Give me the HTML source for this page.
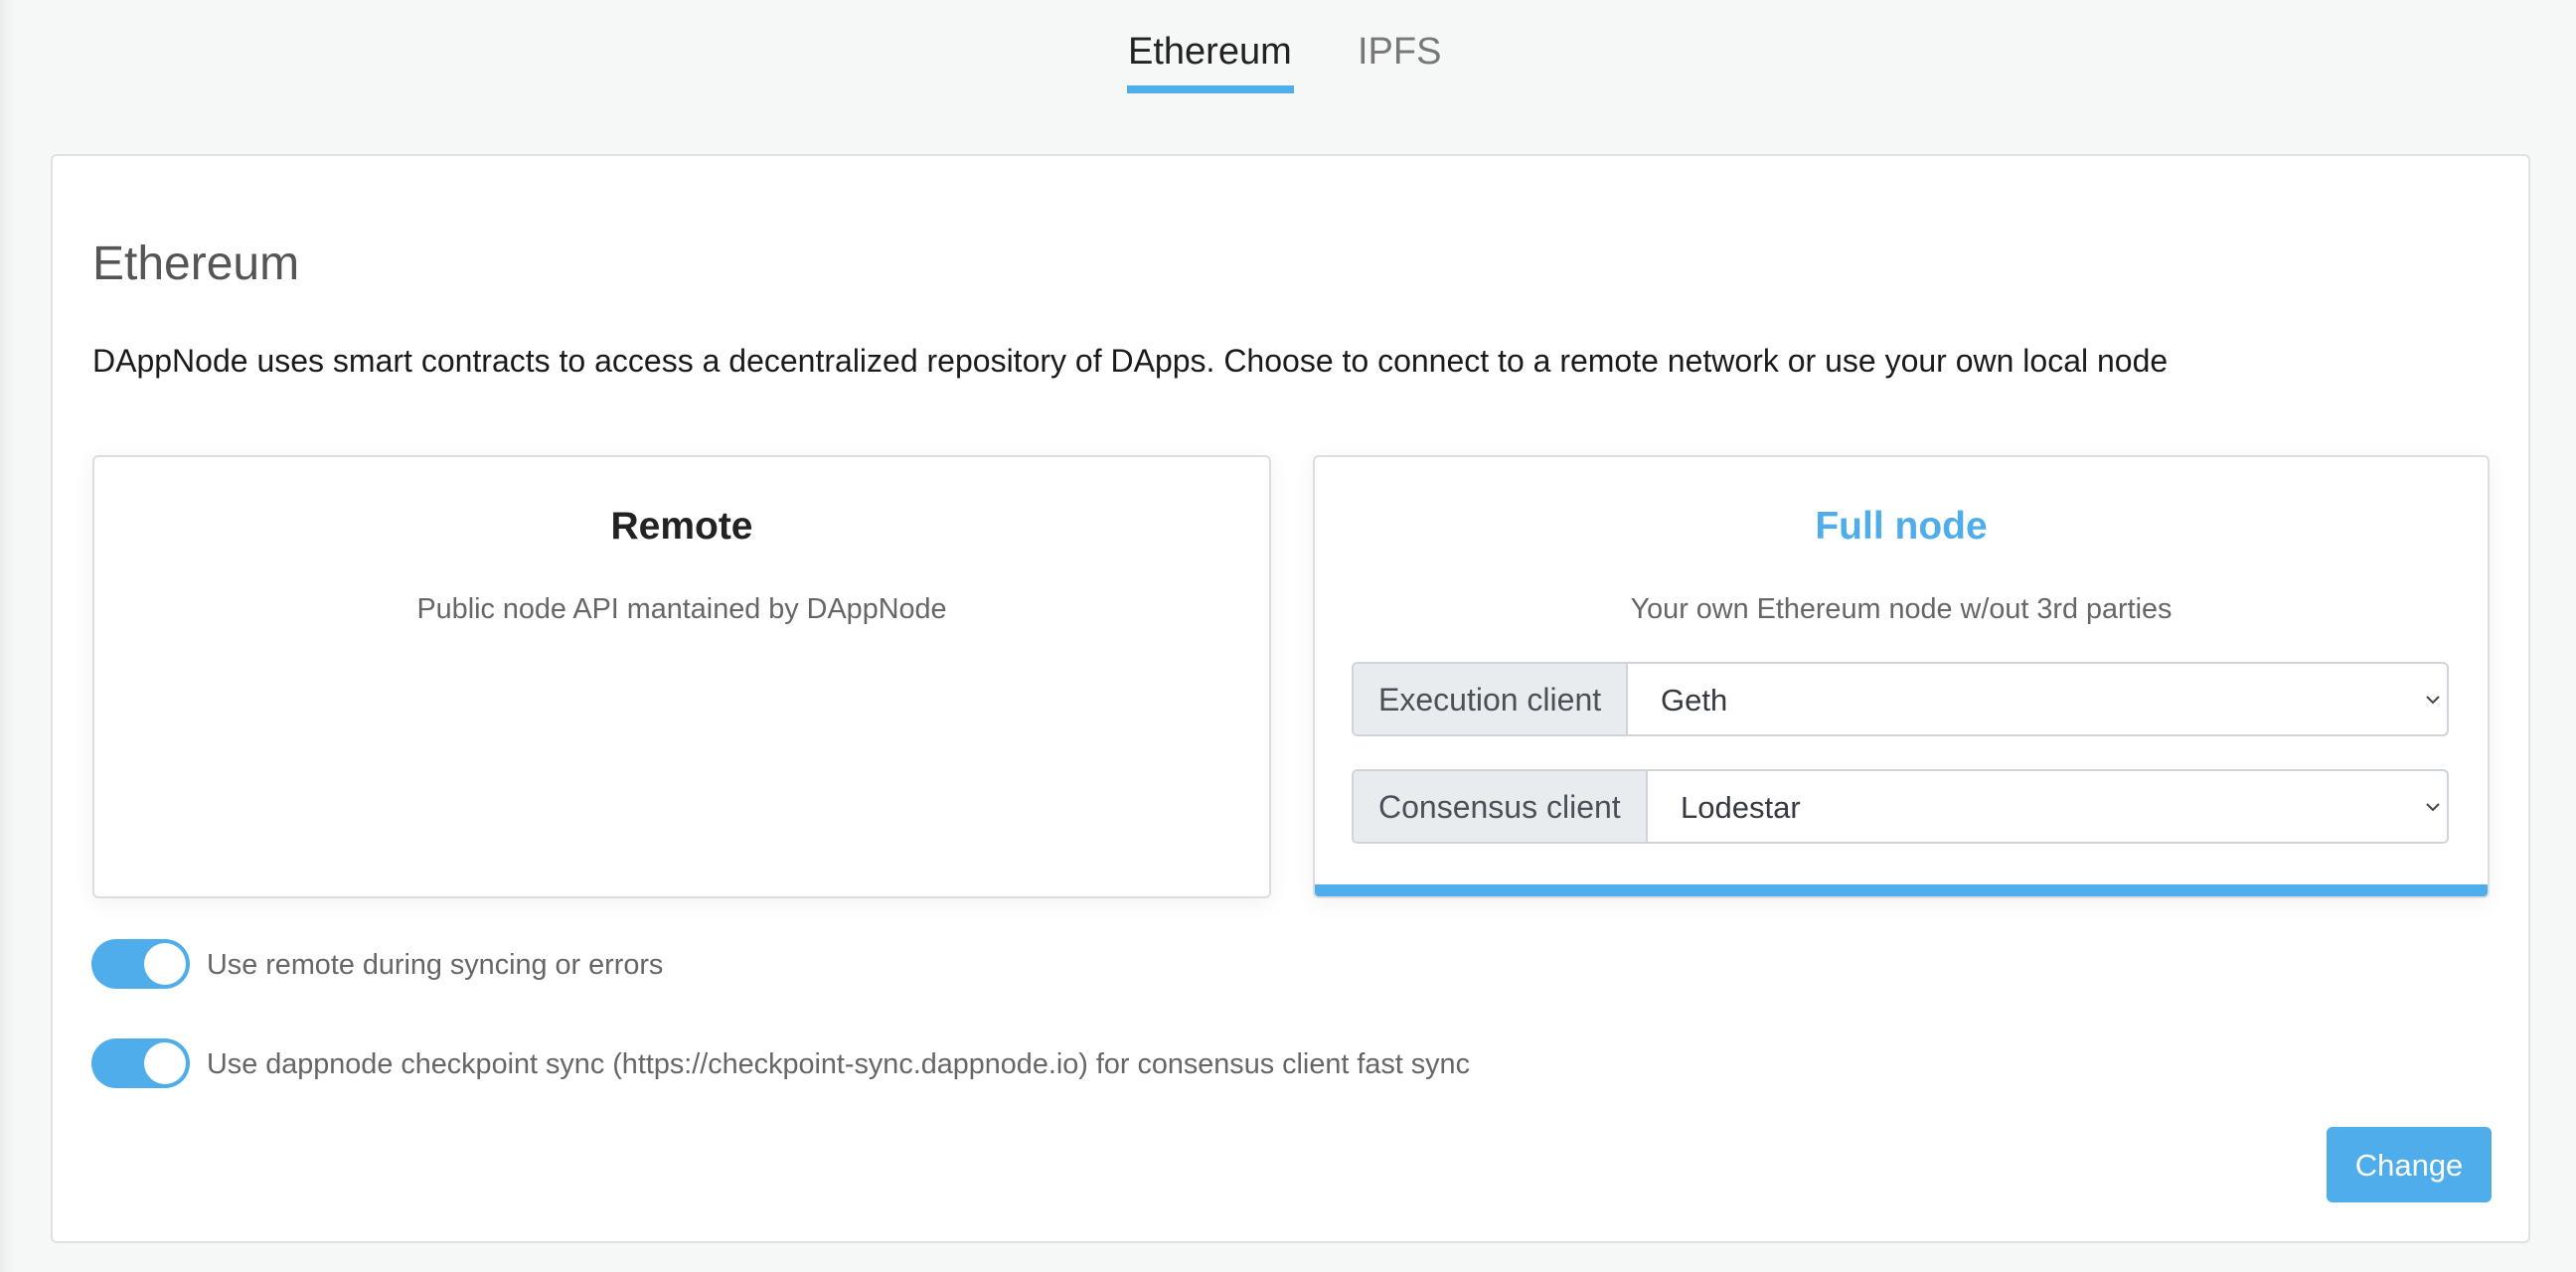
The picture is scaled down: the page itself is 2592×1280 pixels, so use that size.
<!DOCTYPE html>
<html><head><meta charset="utf-8"><style>
*{box-sizing:border-box;margin:0;padding:0}
body{width:2592px;height:1280px;background:#f6f7f7;font-family:"Liberation Sans",Arial,sans-serif;position:relative;overflow:hidden}
.a{position:absolute;white-space:nowrap}
.card{position:absolute;background:#fff;border:2px solid #e0e1e2;border-radius:6px}
.sub{position:absolute;background:#fff;border:2px solid #dcdddf;border-radius:6px;box-shadow:0 4px 24px rgba(0,0,0,0.06)}
.grp{position:absolute;border:2px solid #ced4da;border-radius:6px;display:flex;overflow:hidden;height:75px}
.lab{background:#e9ecef;border-right:2px solid #ced4da;color:#495057;font-size:32px;display:flex;align-items:center;padding-left:25px;padding-top:2px}
.sel{flex:1;display:flex;align-items:center;padding-left:33px;font-size:31px;color:#343a40;position:relative;padding-top:2px}
.chev{position:absolute;right:6px;top:30px}
.tog{position:absolute;width:99px;height:50px;border-radius:25px;background:#4fadeb}
.tog::after{content:"";position:absolute;right:4px;top:4px;width:42px;height:42px;border-radius:50%;background:#fff}
.tl{position:absolute;font-size:28.8px;color:#666;white-space:nowrap}
</style></head><body>
<div class="a" style="left:0;top:0;width:14px;height:1280px;background:linear-gradient(90deg,#ececec,#f6f7f7)"></div>
<div class="a" style="left:1135px;top:31px;font-size:38px;color:#222">Ethereum</div>
<div class="a" style="left:1134px;top:86px;width:168px;height:8px;background:#4fadeb"></div>
<div class="a" style="left:1366px;top:31px;font-size:38px;color:#777">IPFS</div>
<div class="card" style="left:51px;top:155px;width:2495px;height:1096px"></div>
<div class="a" style="left:93px;top:238px;font-size:48px;color:#555">Ethereum</div>
<div class="a" style="left:93px;top:345px;font-size:32px;color:#1a1a1a">DAppNode uses smart contracts to access a decentralized repository of DApps. Choose to connect to a remote network or use your own local node</div>
<div class="sub" style="left:93px;top:458px;width:1186px;height:446px"></div>
<div class="a" style="left:93px;width:1186px;text-align:center;top:508px;font-size:39px;font-weight:bold;color:#222">Remote</div>
<div class="a" style="left:93px;width:1186px;text-align:center;top:597px;font-size:28.8px;color:#666">Public node API mantained by DAppNode</div>
<div class="sub" style="left:1321px;top:458px;width:1184px;height:446px;overflow:hidden"><div style="position:absolute;left:0;right:0;bottom:0;height:12px;background:#4fadeb"></div></div>
<div class="a" style="left:1321px;width:1184px;text-align:center;top:508px;font-size:39px;font-weight:bold;color:#4fadeb">Full node</div>
<div class="a" style="left:1321px;width:1184px;text-align:center;top:597px;font-size:28.8px;color:#666">Your own Ethereum node w/out 3rd parties</div>
<div class="grp" style="left:1360px;top:666px;width:1104px"><div class="lab" style="width:276px">Execution client</div><div class="sel">Geth<svg class="chev" width="16" height="12" viewBox="0 0 16 12"><path d="M2 3l6 6 6-6" fill="none" stroke="#444" stroke-width="2"/></svg></div></div>
<div class="grp" style="left:1360px;top:774px;width:1104px"><div class="lab" style="width:296px">Consensus client</div><div class="sel">Lodestar<svg class="chev" width="16" height="12" viewBox="0 0 16 12"><path d="M2 3l6 6 6-6" fill="none" stroke="#444" stroke-width="2"/></svg></div></div>
<div class="tog" style="left:92px;top:945px"></div>
<div class="tl" style="left:208px;top:955px">Use remote during syncing or errors</div>
<div class="tog" style="left:92px;top:1045px"></div>
<div class="tl" style="left:208px;top:1055px">Use dappnode checkpoint sync (https://checkpoint-sync.dappnode.io) for consensus client fast sync</div>
<div class="a" style="left:2341px;top:1134px;width:166px;height:76px;background:#4fadeb;border-radius:6px;color:#fff;font-size:31px;display:flex;align-items:center;justify-content:center;padding-top:2px">Change</div>
</body></html>
